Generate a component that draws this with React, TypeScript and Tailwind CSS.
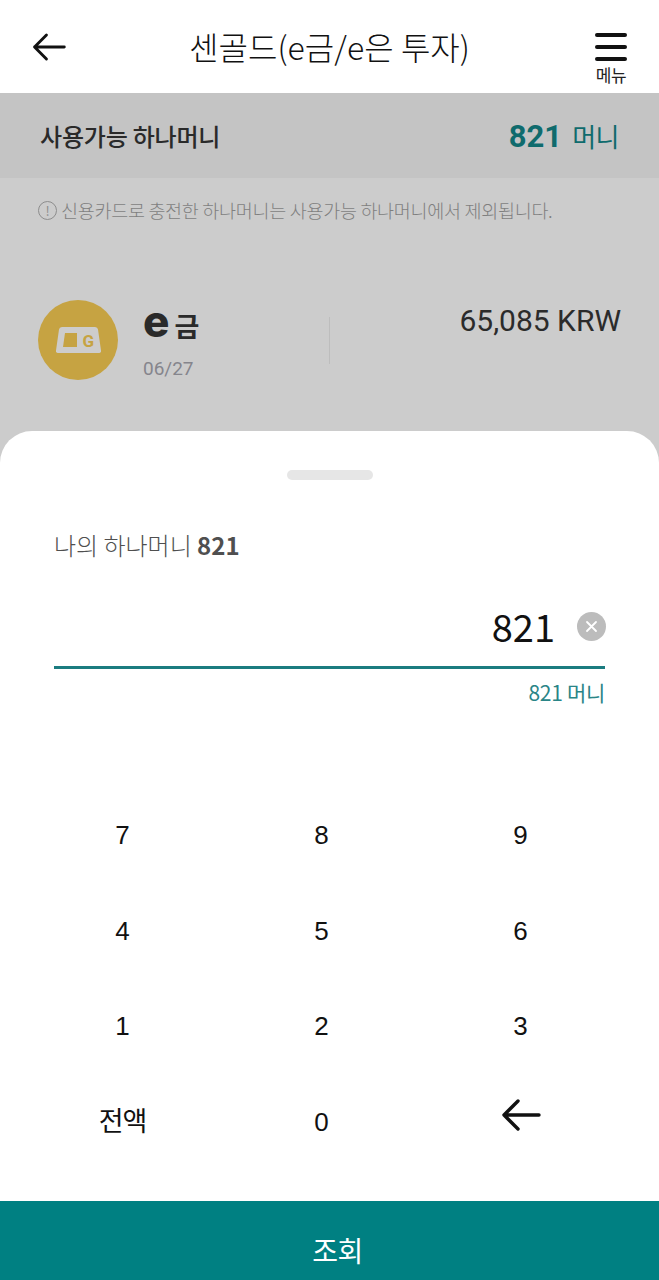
const KEYS = ['7', '8', '9', '4', '5', '6', '1', '2', '3'];

function BackArrow({ className }: { className: string }) {
  return (
    <svg className={className} viewBox="0 0 40 32" fill="none" stroke="#111" strokeWidth="3.4" strokeLinecap="round" strokeLinejoin="round">
      <path d="M38 16H3M17 2 3 16l14 14" />
    </svg>
  );
}

function GoldIcon() {
  return (
    <div className="w-[80px] h-[80px] rounded-full bg-[#c6a342] flex items-center justify-center">
      <svg width="45" height="26" viewBox="0 0 45 26">
        <path d="M6 0h33a3 3 0 0 1 3 2.600l3 20.800a2 2 0 0 1-2 2.600H2a2 2 0 0 1-2-2.600L3 2.600A3 3 0 0 1 6 0z" fill="#cdcccb" />
        <path d="M9 6h12v14H7z" fill="#c6a342" />
        <text x="26.5" y="20" fontSize="17" fontWeight="700" fill="#c6a342" fontFamily="Roboto, sans-serif">G</text>
      </svg>
    </div>
  );
}

export default function App() {
  return (
    <div className="w-[659px] h-[1280px] flex flex-col overflow-hidden bg-[#cccccc] font-['Noto_Sans_CJK_KR',sans-serif]">
      {/* Header */}
      <div className="h-[93px] flex-shrink-0 bg-white flex items-center justify-between pl-[32px] pr-[32px]">
        <BackArrow className="w-[34px] h-[28px]" />
        <p className="text-[32px] font-light tracking-[0.05px] text-[#111] leading-none pb-[1px] mr-[2px]">센골드(e금/e은 투자)</p>
        <div className="flex flex-col items-center w-[32px] pt-[23px]">
          <div className="flex flex-col gap-[8px]">
            <div className="w-[32px] h-[4px] rounded-full bg-[#111]" />
            <div className="w-[32px] h-[4px] rounded-full bg-[#111]" />
            <div className="w-[32px] h-[4px] rounded-full bg-[#111]" />
          </div>
          <span className="text-[17px] leading-[18px] mt-[5px] text-[#222] tracking-[-0.4px] whitespace-nowrap">메뉴</span>
        </div>
      </div>

      {/* Dimmed balance area */}
      <div className="h-[338px] flex-shrink-0 flex flex-col">
        <div className="h-[85px] bg-[#c4c4c4] flex items-center justify-between pl-[40px] pr-[40px]">
          <span className="text-[24px] font-medium tracking-[-0.2px] text-[#2a2a2a]">사용가능 하나머니</span>
          <span className="flex items-baseline gap-[10px] pt-[3px] text-[#0f6b6d]">
            <b className="text-[31px] font-bold font-['Roboto',sans-serif]">821</b>
            <span className="text-[26px] tracking-[-0.5px]">머니</span>
          </span>
        </div>
        <div className="flex items-center gap-[4px] pl-[38px] pt-[20px]">
          <span className="w-[19px] h-[19px] rounded-full border border-[#8d8d8d] text-[#8d8d8d] text-[13px] leading-none flex items-center justify-center">!</span>
          <span className="text-[18.5px] leading-[24px] tracking-[-0.3px] font-light text-[#7f7f7f]">신용카드로 충전한 하나머니는 사용가능 하나머니에서 제외됩니다.</span>
        </div>
        <div className="flex pl-[38px] pr-[38px] mt-[78px]">
          <GoldIcon />
          <div className="ml-[25px] w-[186px] flex flex-col">
            <p className="flex items-center h-[50px] text-[#2a2a2a] font-bold">
              <span className="text-[44px] leading-none pb-[8px] font-['Inter',sans-serif] font-extrabold">e</span>
              <span className="text-[27px] leading-none ml-[5px]">금</span>
            </p>
            <p className="text-[19px] leading-[24px] mt-[7px] text-[#85858c] font-['Roboto',sans-serif]">06/27</p>
          </div>
          <div className="w-px h-[47px] bg-[#bdbdbd] mt-[17px]" />
          <p className="flex-1 text-right text-[30px] leading-[40px] pt-[1px] text-[#2b2b2b] font-['Roboto',sans-serif]">65,085 KRW</p>
        </div>
      </div>

      {/* Bottom sheet */}
      <div className="flex-1 min-h-0 bg-white rounded-t-[32px] flex flex-col">
        <div className="w-[86px] h-[10px] rounded-full bg-[#e6e6e6] mt-[39px] self-center" />
        <div className="pl-[54px] pr-[54px]">
          <p className="text-[24px] leading-[32px] mt-[49px] font-light tracking-[0px] text-[#4f4f4f]">나의 하나머니 <b className="font-bold">821</b></p>
          <div className="flex items-center justify-end h-[76px] mt-[32px] border-b-[3px] border-[#1b7c80] pb-[8px]">
            <span className="text-[38px] leading-none text-[#111]">821</span>
            <span className="w-[29px] h-[29px] ml-[22px] mt-[2px] -mr-[1px] rounded-full bg-[#bcbcbc] flex items-center justify-center">
              <svg width="13" height="13" viewBox="0 0 13 13" stroke="white" strokeWidth="1.8" strokeLinecap="round">
                <path d="M2 2l9 9M11 2l-9 9" />
              </svg>
            </span>
          </div>
          <p className="text-right text-[21px] leading-[26px] mt-[10px] tracking-[-0.3px] text-[#2a8587]">821 머니</p>
        </div>

        {/* Keypad */}
        <div className="grid grid-cols-3 w-[597px] ml-[23px] mt-[83px] font-['Liberation_Sans',sans-serif] text-[26px] text-[#111] auto-rows-[95.5px]">
          {KEYS.map((k) => (
            <div key={k} className="flex items-center justify-center">{k}</div>
          ))}
          <div className="flex items-center justify-center pb-[4px] text-[27px] tracking-[-1.2px] font-['Noto_Sans_CJK_KR',sans-serif]">전액</div>
          <div className="flex items-center justify-center">0</div>
          <div className="flex items-center justify-center pb-[14px]">
            <BackArrow className="w-[42px] h-[32px]" />
          </div>
        </div>

        <div className="mt-auto h-[79px] flex-shrink-0 bg-[#008082] flex items-center justify-center pl-[16px] pt-[18px] text-white text-[28px] tracking-[-0.5px]">
          조회
        </div>
      </div>
    </div>
  );
}
